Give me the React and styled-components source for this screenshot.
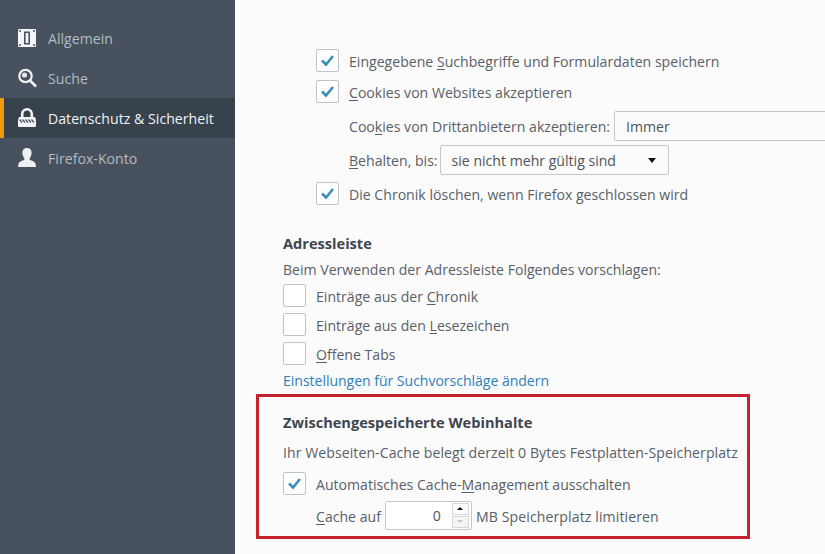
import React from "react";
import styled, { createGlobalStyle } from "styled-components";

const Global = createGlobalStyle`
  html, body { margin: 0; padding: 0; width: 825px; height: 554px; overflow: hidden; background: #fbfbfc; }
  * { box-sizing: border-box; }
  #root { width: 825px; height: 554px; }
`;
const Page = styled.div`
  display: flex; width: 825px; height: 554px; overflow: hidden;
  font-family: "Open Sans", "Noto Sans", sans-serif; font-size: 14.1px; color: #5a5f66;
`;
const Sidebar = styled.nav`
  width: 235px; flex: none; background: #47525e; padding-top: 18px;
  display: flex; flex-direction: column;
`;
const NavItem = styled.div`
  height: 40px; display: flex; align-items: center; gap: 12px; padding-left: ${p => p.$active ? 14 : 18}px;
  border-left: ${p => p.$active ? "4px solid #f29a0c" : "0"};
  background: ${p => p.$active ? "#38424c" : "transparent"};
  color: ${p => p.$active ? "#eef3f6" : "#b4bbc2"};
  letter-spacing: 0.03px;
`;
const NavIcon = styled.svg`width: 18px; height: 20px; flex: none; display: block; overflow: visible;`;
const Content = styled.main`
  flex: 1; min-width: 0; padding: 0 0 0 21px; overflow: hidden;
  display: flex; flex-direction: column;
`;
const Indented = styled.div`
  padding: 49px 0 0 60px; display: flex; flex-direction: column; width: 640px;
`;
const CheckRow = styled.div`
  display: flex; align-items: center; gap: 10px; height: 23px;
  margin-top: ${p => p.$mt || 0}px; white-space: nowrap;
`;
const CheckLabel = styled.span`padding-top: 2px;`;
const Box = styled.span`
  width: 23px; height: 23px; flex: none; border: 1px solid #bfc3c7; border-radius: 2px; background: #fff;
  display: flex; align-items: center; justify-content: center;
`;
const FieldRow = styled.div`
  display: flex; align-items: center; gap: ${p => p.$gap ?? 4}px; height: 30px; white-space: nowrap;
  margin-top: ${p => p.$mt || 0}px; padding-left: 33px;
`;
const FieldLabel = styled.span`
  padding-top: ${p => p.$low ? 2 : 0}px; letter-spacing: ${p => p.$ls || 0}px;
`;
const Select = styled.div`
  width: ${p => p.$w}px; height: 30px; flex: none; border: 1px solid #c4c7ca; border-radius: 2px; background: #fbfbfb;
  display: flex; align-items: center; justify-content: space-between; padding: 0 12px 0 11px; color: #4f545a;
`;
const Caret = styled.span`
  width: 0; height: 0; border-left: 4.5px solid transparent; border-right: 4.5px solid transparent;
  border-top: 5px solid #111;
`;
const Section = styled.section`
  margin-left: 27px; margin-top: ${p => p.$mt || 0}px; display: flex; flex-direction: column; align-items: flex-start;
`;
const Heading = styled.h2`
  margin: -1px 0 1px; font-size: 14.6px; line-height: 20px; font-weight: 700; color: #3e4650;
`;
const Line = styled.div`
  margin-top: ${p => p.$mt || 0}px; line-height: 20px; white-space: nowrap;
  letter-spacing: ${p => p.$ls || 0}px;
`;
const Link = styled.a`
  margin-top: 6px; line-height: 20px; color: #2f80b8; text-decoration: none; letter-spacing: -0.05px;
`;
const Frame = styled.section`
  margin-top: 3px; width: 494px; height: 145px; border: 3px solid #c5222e;
  padding: 16px 0 0 24px; display: flex; flex-direction: column; align-items: flex-start;
`;
const NumberField = styled.div`
  width: 87px; height: 29px; flex: none; border: 1px solid #c4c7ca; background: #fff; border-radius: 2px;
  display: flex; align-items: center; justify-content: flex-end; padding-right: 2px; gap: 11px; color: #4f545a;
`;
const Spin = styled.div`display: flex; flex-direction: column; gap: 1px; width: 17px;`;
const SpinBtn = styled.span`
  height: 12px; border: 1px solid #d4d6d8; background: ${p => p.$off ? "#f4f4f4" : "#fbfbfb"};
  display: flex; align-items: center; justify-content: center;
`;
const Tri = styled.span`
  width: 0; height: 0; border-left: 3px solid transparent; border-right: 3px solid transparent;
  ${p => p.$down ? `border-top: 3px solid #c8c8c8;` : `border-bottom: 3px solid #111;`}
`;
const U = styled.span`text-decoration: underline; text-underline-offset: 2px; text-decoration-thickness: 1px;`;

const Check = ({ on }) => (
  <Box>
    {on && (
      <svg width="15" height="13" viewBox="0 0 15 13">
        <path d="M2 6.5 L6 10.5 L13 2" fill="none" stroke="#3b8fb3" strokeWidth="2.6" />
      </svg>
    )}
  </Box>
);

const GeneralIcon = () => (
  <NavIcon viewBox="0 0 18 20">
    <rect x="0" y="1" width="18" height="18" rx="1" fill="#f4f5f6" />
    <rect x="6" y="3.5" width="6" height="13" fill="#47525e" />
    <rect x="7.6" y="5" width="2.8" height="10" fill="#f4f5f6" />
    <circle cx="2" cy="3" r="1" fill="#47525e" /><circle cx="16" cy="3" r="1" fill="#47525e" />
    <circle cx="2" cy="17" r="1" fill="#47525e" /><circle cx="16" cy="17" r="1" fill="#47525e" />
  </NavIcon>
);
const SearchIcon = () => (
  <NavIcon viewBox="0 0 18 20">
    <circle cx="7.5" cy="8" r="6.2" fill="none" stroke="#f0f1f2" strokeWidth="2.2" />
    <circle cx="6.5" cy="7" r="2.6" fill="#e4e6e8" />
    <path d="M12 12.5 L18 18.5" stroke="#f0f1f2" strokeWidth="2.6" />
  </NavIcon>
);
const LockIcon = () => (
  <NavIcon viewBox="0 0 18 20">
    <path d="M4.2 9 V6 a4.8 4.8 0 0 1 9.6 0 V9" fill="none" stroke="#f4f5f6" strokeWidth="2.6" />
    <path d="M1 9 H17 L18 12 V18 a1 1 0 0 1 -1 1 H1 a1 1 0 0 1 -1 -1 V12 Z" fill="#f4f5f6" />
    <path d="M1.5 11.5 l2.5 3 M4.5 11.5 l2.5 3 M7.5 11.5 l2.5 3 M10.5 11.5 l2.5 3 M13.5 11.5 l2.5 3" stroke="#47525e" strokeWidth="1.2" />
  </NavIcon>
);
const UserIcon = () => (
  <NavIcon viewBox="0 0 18 20">
    <path d="M9 0 c3 0 4.6 2 4.6 4.8 0 2.3 -0.9 4.2 -2 5.4 v1.6 c2.2 1 5.2 1.6 5.9 4 L18 19 H0 l0.5 -3.2 c0.7 -2.4 3.7 -3 5.9 -4 v-1.6 c-1.1 -1.2 -2 -3.1 -2 -5.4 C4.4 2 6 0 9 0 Z" fill="#eef0f1" />
  </NavIcon>
);

export default function App() {
  return (
    <Page>
      <Global />
      <Sidebar>
        <NavItem><GeneralIcon />Allgemein</NavItem>
        <NavItem><SearchIcon />Suche</NavItem>
        <NavItem $active><LockIcon />Datenschutz &amp; Sicherheit</NavItem>
        <NavItem><UserIcon />Firefox-Konto</NavItem>
      </Sidebar>
      <Content>
        <Indented>
          <CheckRow><Check on /><CheckLabel>Eingegebene <U>S</U>uchbegriffe und Formulardaten speichern</CheckLabel></CheckRow>
          <CheckRow $mt={8}><Check on /><CheckLabel><U>C</U>ookies von Websites akzeptieren</CheckLabel></CheckRow>
          <FieldRow $mt={8}><span>Coo<U>k</U>ies von Drittanbietern akzeptieren:</span><Select $w={300}>Immer</Select></FieldRow>
          <FieldRow $mt={4} $gap={2}><span><U>B</U>ehalten, bis:</span><Select $w={229}>sie nicht mehr gültig sind<Caret /></Select></FieldRow>
          <CheckRow $mt={7}><Check on /><CheckLabel>Die Chronik löschen, wenn Firefox <U>g</U>eschlossen wird</CheckLabel></CheckRow>
        </Indented>
        <Section $mt={29}>
          <Heading>Adressleiste</Heading>
          <Line $mt={6}>Beim Verwenden der Adressleiste Folgendes vorschlagen:</Line>
          <CheckRow $mt={4}><Check /><CheckLabel>Einträge aus der <U>C</U>hronik</CheckLabel></CheckRow>
          <CheckRow $mt={6}><Check /><CheckLabel>Einträge aus den <U>L</U>esezeichen</CheckLabel></CheckRow>
          <CheckRow $mt={6}><Check /><CheckLabel><U>O</U>ffene Tabs</CheckLabel></CheckRow>
          <Link>Einstellungen für Suchvorschläge ändern</Link>
        </Section>
        <Frame>
          <Heading>Zwischengespeicherte Webinhalte</Heading>
          <Line $mt={10} $ls={0.06}>Ihr Webseiten-Cache belegt derzeit 0 Bytes Festplatten-Speicherplatz</Line>
          <CheckRow $mt={9}><Check on /><CheckLabel>Automatisches Cache-<U>M</U>anagement ausschalten</CheckLabel></CheckRow>
          <FieldRow $mt={5}>
            <FieldLabel $low><U>C</U>ache auf</FieldLabel>
            <NumberField>0<Spin><SpinBtn><Tri /></SpinBtn><SpinBtn $off><Tri $down /></SpinBtn></Spin></NumberField>
            <FieldLabel $low $ls={0.1}>MB Speicherplatz limitieren</FieldLabel>
          </FieldRow>
        </Frame>
      </Content>
    </Page>
  );
}
